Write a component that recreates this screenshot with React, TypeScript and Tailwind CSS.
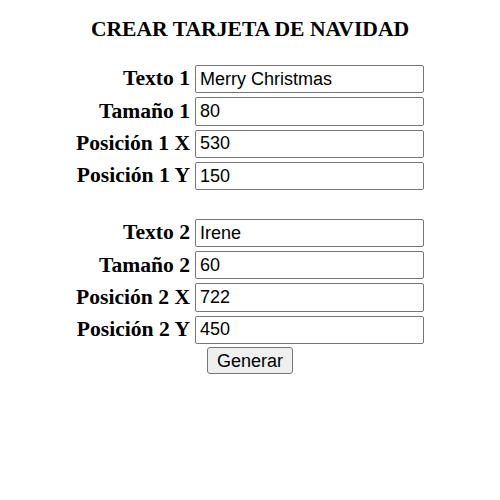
const serif = "font-['Liberation_Serif','Times_New_Roman',serif]"
const sans = "font-['Liberation_Sans',Arial,sans-serif]"

const group1 = [
  { label: 'Texto 1', value: 'Merry Christmas' },
  { label: 'Tamaño 1', value: '80' },
  { label: 'Posición 1 X', value: '530' },
  { label: 'Posición 1 Y', value: '150' },
]

const group2 = [
  { label: 'Texto 2', value: 'Irene' },
  { label: 'Tamaño 2', value: '60' },
  { label: 'Posición 2 X', value: '722' },
  { label: 'Posición 2 Y', value: '450' },
]

function Field({ label, value }: { label: string; value: string }) {
  return (
    <>
      <label className={`${serif} text-[21.6px] font-bold text-right text-black leading-none`}>
        {label}
      </label>
      <input
        className={`${sans} w-[229px] h-[28.3px] px-[4px] text-[18px] text-black bg-white border border-[#767676] rounded-[2px] outline-none`}
        defaultValue={value}
      />
    </>
  )
}

export default function App() {
  return (
    <div className="w-[500px] h-[500px] bg-white flex flex-col items-center">
      <h2 className={`${serif} text-[21.6px] font-bold text-black mt-[17px] leading-[25px]`}>
        CREAR TARJETA DE NAVIDAD
      </h2>
      <div className="mt-[23px] grid grid-cols-[auto_auto] gap-x-[5px] gap-y-[4px] items-center">
        {group1.map((f) => (
          <Field key={f.label} {...f} />
        ))}
        <div className="col-span-2 h-[20.7px]" />
        {group2.map((f) => (
          <Field key={f.label} {...f} />
        ))}
      </div>
      <button
        className={`${sans} mt-[3px] w-[86px] h-[27px] text-[18px] text-black bg-[#efefef] border border-[#767676] rounded-[3px]`}
      >
        Generar
      </button>
    </div>
  )
}
